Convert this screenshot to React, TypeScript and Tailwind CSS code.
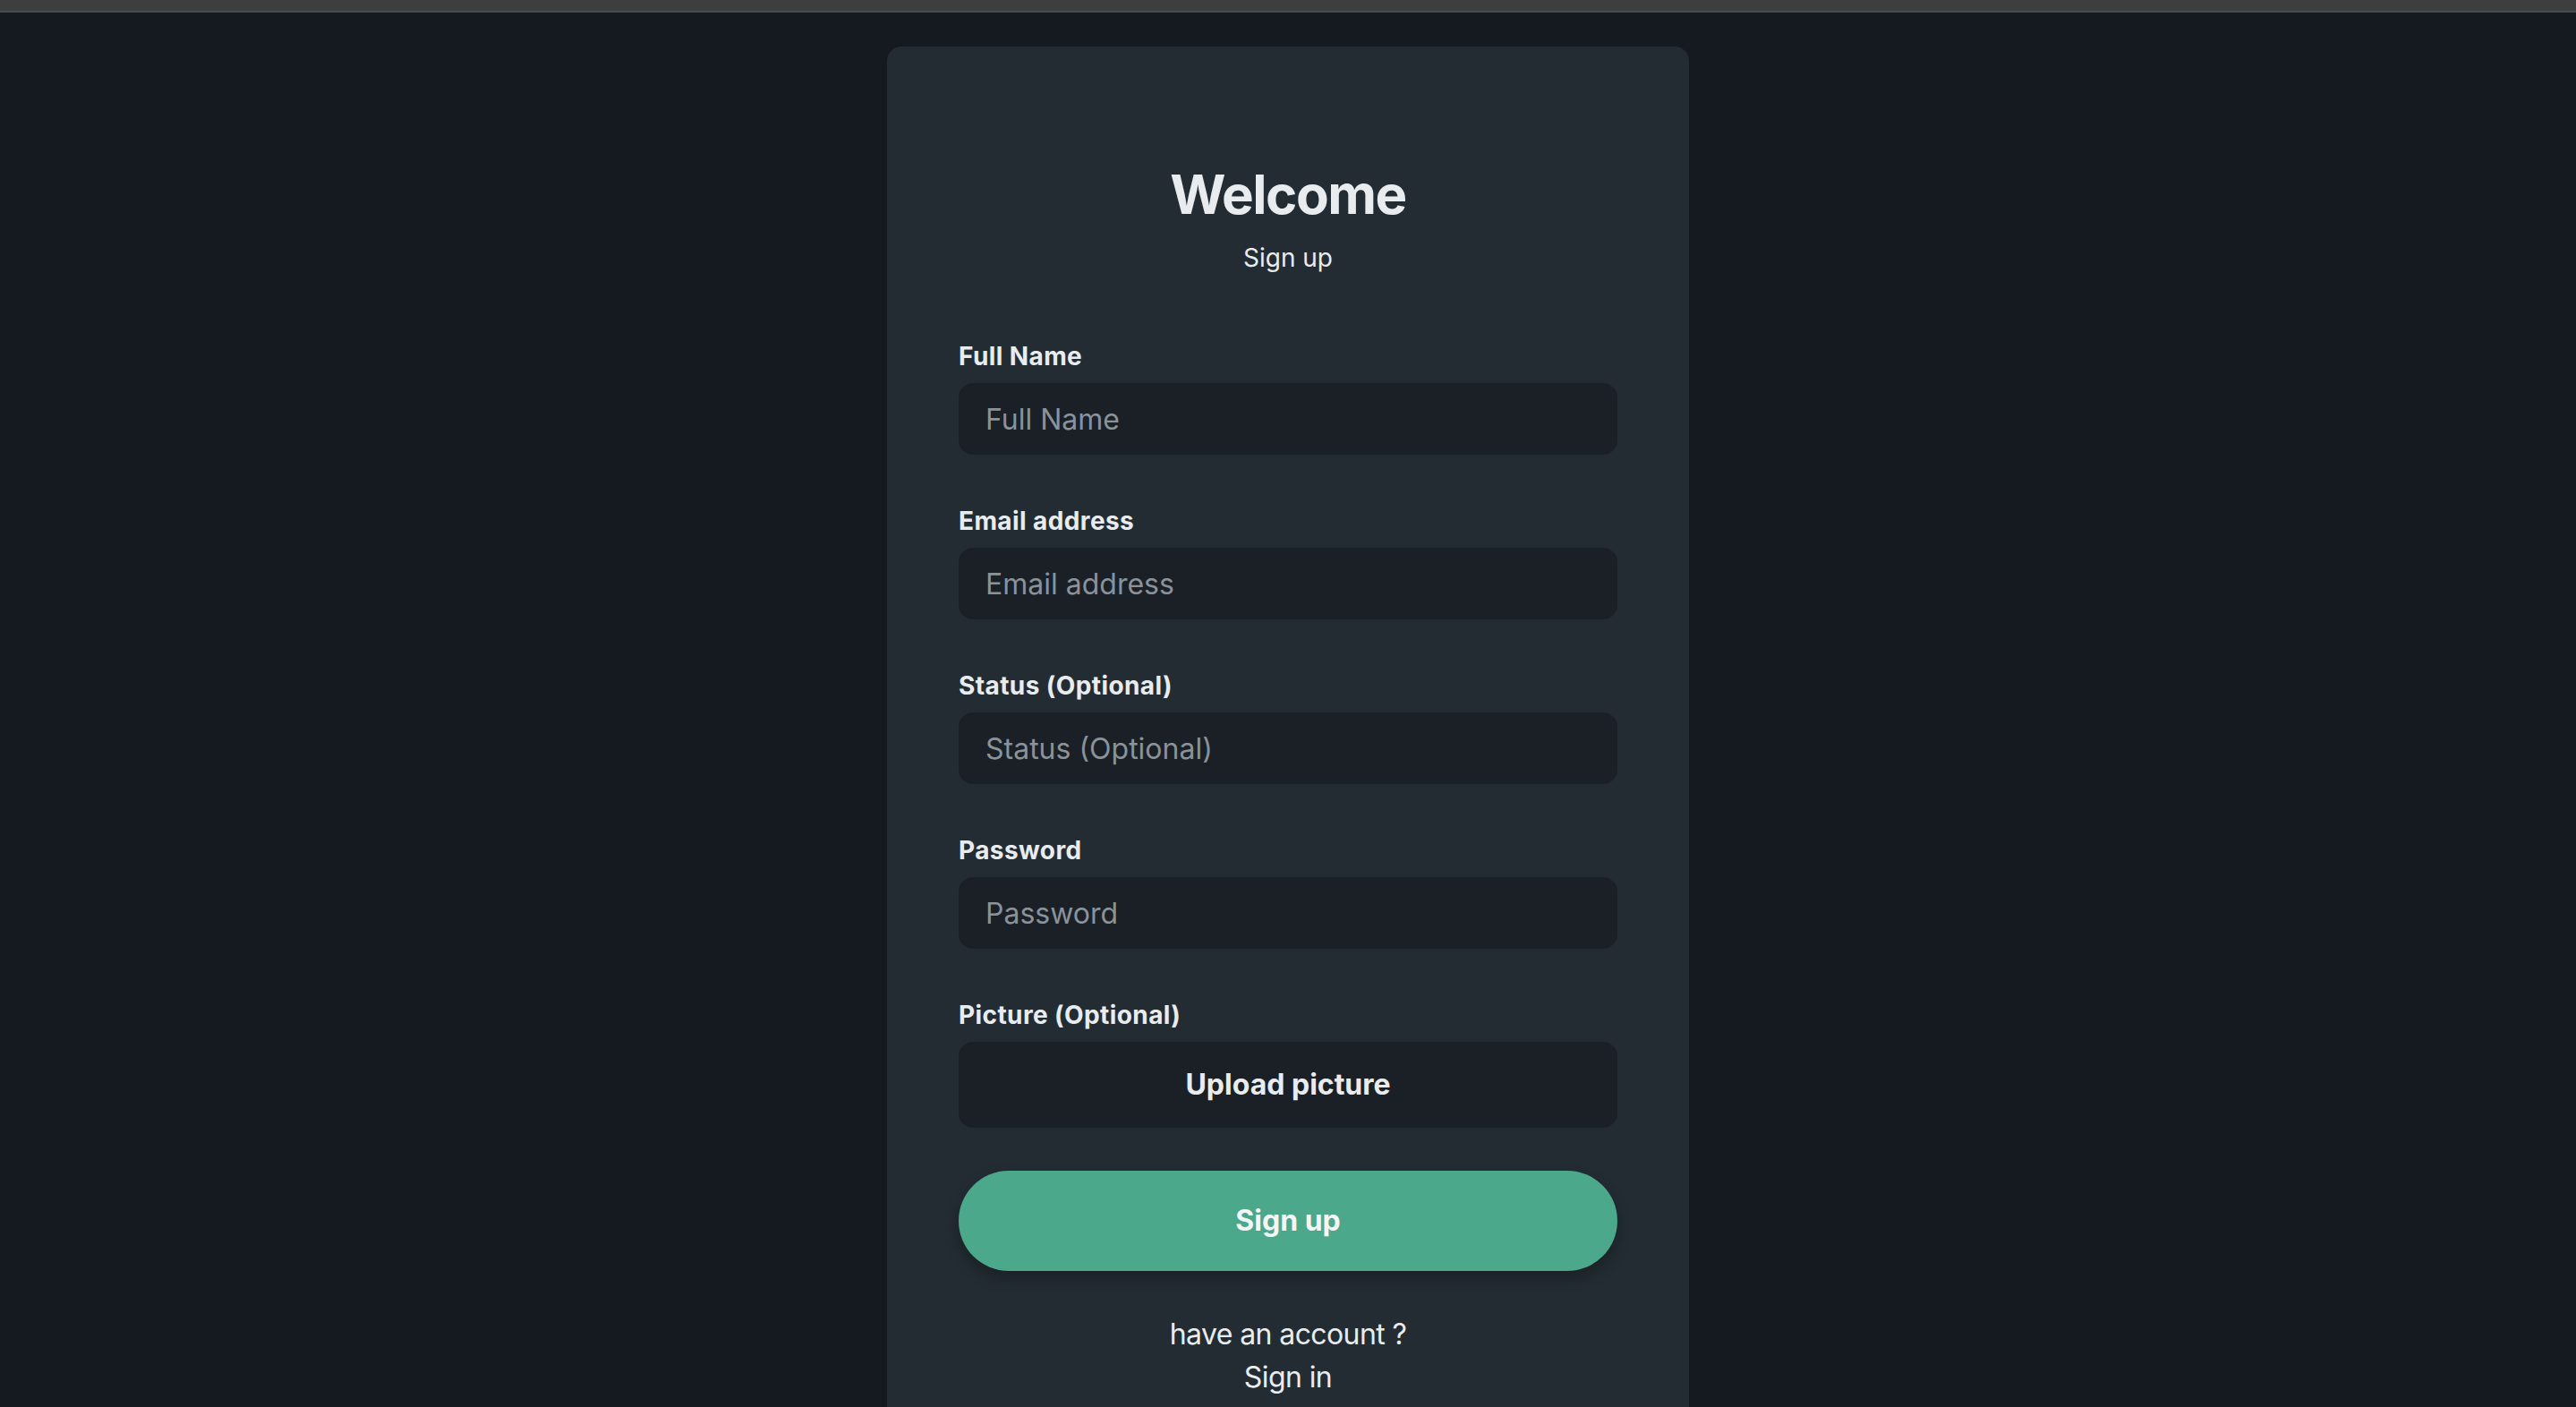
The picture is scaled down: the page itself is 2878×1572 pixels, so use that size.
import { useState } from "react";

const fields = [
    { label: "Full Name", type: "text" },
    { label: "Email address", type: "email" },
    { label: "Status (Optional)", type: "text" },
    { label: "Password", type: "password" },
];

export default function App() {
    const [values, setValues] = useState<Record<string, string>>({});

    return (
        <div className="min-h-screen bg-[#141a1f] font-['Inter',sans-serif] text-[#e9ecef]">
            <div className="h-[12px] bg-[#3e3e3e]" />
            <div className="h-[2px] bg-[#4b4c49]" />
            <div className="flex justify-center pt-[38px]">
                <form className="w-[896px] rounded-[16px] bg-[#232c33] px-[80px] pt-[129px] pb-[80px]" onSubmit={e => e.preventDefault()}>
                    <h1 className="text-center text-[60px] leading-[72px] font-bold tracking-[-1.5px]">Welcome</h1>
                    <p className="mt-[15px] text-center text-[28px] leading-[40px]">Sign up</p>

                    <div className="mt-[70px] flex flex-col gap-[54px]">
                        {fields.map(f => (
                            <div key={f.label} className="flex flex-col gap-[10px]">
                                <label className="text-[28px] leading-[40px] font-bold tracking-[0.4px]">{f.label}</label>
                                <input
                                    type={f.type}
                                    placeholder={f.label}
                                    value={values[f.label] ?? ""}
                                    onChange={e => setValues({ ...values, [f.label]: e.target.value })}
                                    className="h-[80px] w-full rounded-[16px] bg-[#1b2027] px-[30px] text-[32px] text-[#e9ecef] outline-none placeholder:text-[#8a929a]"
                                />
                            </div>
                        ))}
                        <div className="flex flex-col gap-[10px]">
                            <label className="text-[28px] leading-[40px] font-bold tracking-[0.4px]">Picture (Optional)</label>
                            <button type="button" className="flex h-[96px] w-full items-center justify-center rounded-[16px] bg-[#1b2027] text-[32px] font-bold">
                                Upload picture
                            </button>
                        </div>
                    </div>

                    <button type="submit" className="mt-[48px] flex h-[112px] w-full items-center justify-center rounded-full bg-[#4ca88a] text-[32px] font-bold text-[#f3f5f6] shadow-[0_8px_16px_rgba(0,0,0,0.25)]">
                        Sign up
                    </button>

                    <div className="mt-[47px] flex flex-col items-center text-[32px] leading-[48px] tracking-[-0.6px]">
                        <span>have an account ?</span>
                        <a href="#" className="text-[#e9ecef]">Sign in</a>
                    </div>
                </form>
            </div>
        </div>
    );
}
